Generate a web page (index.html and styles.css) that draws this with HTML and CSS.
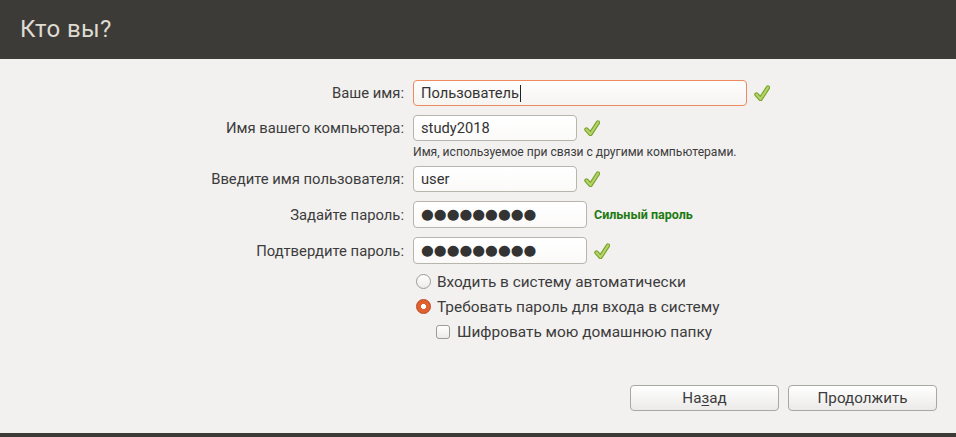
FILE: index.html
```html
<!DOCTYPE html>
<html lang="ru">
<head>
<meta charset="utf-8">
<title>Кто вы?</title>
<link rel="stylesheet" href="styles.css">
</head>
<body>
<header class="topbar"><h1 class="title">Кто вы?</h1></header>
<main class="page">
  <form class="form">
    <div class="row">
      <label class="label">Ваше имя:</label>
      <div class="field">
        <div class="input input-wide input-focus"><span>Пользователь</span><span class="caret"></span></div>
        <svg class="check" viewBox="0 0 16 16"><path class="ck-o" d="M2.5 9.5 L6.5 14 L14 2.5"/><path class="ck-i" d="M2.5 9.5 L6.5 14 L14 2.5"/></svg>
      </div>
    </div>
    <div class="row row-tight">
      <label class="label">Имя вашего компьютера:</label>
      <div class="field">
        <div class="input input-mid">study2018</div>
        <svg class="check" viewBox="0 0 16 16"><path class="ck-o" d="M2.5 9.5 L6.5 14 L14 2.5"/><path class="ck-i" d="M2.5 9.5 L6.5 14 L14 2.5"/></svg>
      </div>
    </div>
    <div class="row row-hint">
      <span class="label"></span>
      <div class="hint">Имя, используемое при связи с другими компьютерами.</div>
    </div>
    <div class="row">
      <label class="label">Введите имя пользователя:</label>
      <div class="field">
        <div class="input input-mid">user</div>
        <svg class="check" viewBox="0 0 16 16"><path class="ck-o" d="M2.5 9.5 L6.5 14 L14 2.5"/><path class="ck-i" d="M2.5 9.5 L6.5 14 L14 2.5"/></svg>
      </div>
    </div>
    <div class="row">
      <label class="label">Задайте пароль:</label>
      <div class="field">
        <div class="input input-pw"><span class="dots">●●●●●●●●●</span></div>
        <span class="strength">Сильный пароль</span>
      </div>
    </div>
    <div class="row">
      <label class="label">Подтвердите пароль:</label>
      <div class="field">
        <div class="input input-pw"><span class="dots">●●●●●●●●●</span></div>
        <svg class="check" viewBox="0 0 16 16"><path class="ck-o" d="M2.5 9.5 L6.5 14 L14 2.5"/><path class="ck-i" d="M2.5 9.5 L6.5 14 L14 2.5"/></svg>
      </div>
    </div>
    <div class="options">
      <div class="opt"><span class="radio"></span><span>Входить в систему автоматически</span></div>
      <div class="opt"><span class="radio radio-on"></span><span>Требовать пароль для входа в систему</span></div>
      <div class="opt opt-sub"><span class="box"></span><span>Шифровать мою домашнюю папку</span></div>
    </div>
  </form>
  <div class="actions">
    <button type="button" class="btn">На<u>з</u>ад</button>
    <button type="button" class="btn">Продолжить</button>
  </div>
</main>
<footer class="bottombar"></footer>
</body>
</html>
```

FILE: styles.css
```css
html, body {
  margin: 0;
  padding: 0;
}
body {
  width: 956px;
  height: 437px;
  overflow: hidden;
  background: #f2f1f0;
  font-family: Roboto, "Noto Sans", "DejaVu Sans", sans-serif;
  color: #3c3c3c;
  display: flex;
  flex-direction: column;
}
.topbar {
  height: 59px;
  background: #3c3b37;
  display: flex;
  align-items: center;
  padding-left: 20px;
  flex: none;
}
.title {
  margin: 0;
  font-weight: 400;
  font-size: 24px;
  color: #dfdbd2;
  letter-spacing: 0.4px;
  padding-bottom: 2px;
}
.page {
  flex: 1;
  display: flex;
  flex-direction: column;
  padding-top: 21px;
  padding-bottom: 22px;
}
.form {
  display: flex;
  flex-direction: column;
}
.row {
  display: flex;
  align-items: center;
  gap: 9px;
  margin-bottom: 9px;
}
.row-tight {
  margin-bottom: 3px;
}
.row-hint {
  margin-bottom: 6px;
  height: 16px;
}
.label {
  width: 404px;
  flex: none;
  text-align: right;
  font-size: 14.8px;
}
.field {
  display: flex;
  align-items: center;
  gap: 7px;
}
.input {
  box-sizing: border-box;
  height: 26px;
  border: 1px solid #b8b5ae;
  border-radius: 4px;
  background: linear-gradient(#ffffff, #fbfaf9);
  display: flex;
  align-items: center;
  padding-left: 7px;
  font-size: 14.7px;
  color: #333;
}
.input-wide { width: 334px; }
.input-mid { width: 164px; }
.input-pw { width: 174px; height: 27px; }
.input-focus {
  border-color: #ec8a60;
  background: linear-gradient(#fffefe, #f6f4f1);
}
.caret {
  display: inline-block;
  width: 1px;
  height: 17px;
  background: #222;
  margin-left: 1px;
}
.dots {
  font-family: "DejaVu Sans", sans-serif;
  font-size: 14.7px;
  line-height: 1;
  color: #333;
  margin-left: 0;
}
.check {
  width: 16px;
  height: 16px;
  flex: none;
}
.ck-o {
  fill: none;
  stroke: #7aa32a;
  stroke-width: 4.4;
  stroke-linecap: round;
  stroke-linejoin: round;
}
.ck-i {
  fill: none;
  stroke: #b3d46a;
  stroke-width: 2.2;
  stroke-linecap: round;
  stroke-linejoin: round;
}
.strength {
  font-size: 12.5px;
  font-weight: 700;
  color: #217a10;
}
.hint {
  font-size: 12.1px;
  color: #3c3c3c;
}
.options {
  margin-left: 416px;
  margin-top: -4px;
  display: flex;
  flex-direction: column;
}
.opt {
  height: 25px;
  display: flex;
  align-items: center;
  gap: 6px;
  font-size: 15.4px;
}
.opt-sub {
  margin-left: 20px;
}
.radio {
  box-sizing: border-box;
  width: 15px;
  height: 15px;
  border-radius: 50%;
  border: 1px solid #9d9b96;
  background: linear-gradient(#ffffff, #ecebe9);
  flex: none;
}
.radio-on {
  border-color: #b8451c;
  background: radial-gradient(circle, #ffffff 0 2.3px, #e0612f 2.8px);
}
.box {
  box-sizing: border-box;
  width: 14px;
  height: 14px;
  border-radius: 3px;
  border: 1px solid #9d9b96;
  background: linear-gradient(#ffffff, #ecebe9);
  flex: none;
  margin-right: 1px;
}
.actions {
  margin-top: auto;
  display: flex;
  justify-content: flex-end;
  gap: 9px;
  padding-right: 19px;
}
.btn {
  box-sizing: border-box;
  width: 149px;
  height: 26px;
  border: 1px solid #a9a7a2;
  border-radius: 4px;
  background: linear-gradient(#ffffff, #ebeae8);
  font-family: Roboto, "Noto Sans", "DejaVu Sans", sans-serif;
  font-size: 15.2px;
  color: #3c3c3c;
  padding: 0;
}
.btn u {
  text-underline-offset: 2px;
}
.bottombar {
  height: 4px;
  background: #3c3b37;
  flex: none;
}
```
